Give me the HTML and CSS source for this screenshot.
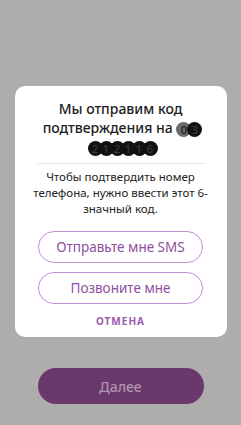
FILE: index.html
```html
<!DOCTYPE html>
<html lang="ru">
<head>
    <meta charset="UTF-8">
    <meta name="viewport" content="width=device-width, initial-scale=1.0">
    <title>Подтверждение</title>
    <link rel="stylesheet" href="styles.css">
</head>
<body>
    <div class="screen">
        <!-- Диалог подтверждения -->
        <div class="dialog">
            <h2 class="title">Мы отправим код<br>подтверждения на <span class="blot soft">0</span><span class="blot">3</span><br><span class="blot">2</span><span class="blot">1</span><span class="blot">2</span><span class="blot">1</span><span class="blot">1</span><span class="blot">6</span></h2>
            <div class="divider"></div>
            <p class="text">Чтобы подтвердить номер<br>телефона, нужно ввести этот 6-<br>значный код.</p>
            <button class="outline-button">Отправьте мне SMS</button>
            <button class="outline-button">Позвоните мне</button>
            <button class="cancel-button">ОТМЕНА</button>
        </div>
        <button class="next-button">Далее</button>
    </div>
</body>
</html>
```

FILE: styles.css
```css
body {
    font-family: "Noto Sans", Arial, sans-serif;
    margin: 0;
    padding: 0;
    background-color: #adadad;
}
.screen {
    height: 425px;
    display: flex;
    flex-direction: column;
    align-items: center;
    padding-top: 86px;
    box-sizing: border-box;
}
.dialog {
    width: 212px;
    background-color: #fff;
    border-radius: 10px;
    padding: 13px 0 6px;
    box-sizing: border-box;
    display: flex;
    flex-direction: column;
    align-items: center;
}
.title {
    margin: 0;
    font-size: 14px;
    font-weight: 500;
    line-height: 19px;
    color: #1d1d1d;
    text-align: center;
    white-space: nowrap;
}
.blot {
    display: inline-block;
    width: 15px;
    height: 15px;
    line-height: 15px;
    border-radius: 50%;
    background-color: #111;
    color: #3a3a3a;
    font-size: 11px;
    margin-right: -4px;
    vertical-align: middle;
}
.blot.soft {
    background-color: #6a6a6a;
    color: #1a1a1a;
}
.divider {
    width: 167px;
    height: 1px;
    background-color: #e6e6e6;
    margin: 7px 0 5px;
}
.text {
    margin: 0 0 14px;
    font-size: 11.5px;
    line-height: 16px;
    color: #222;
    text-align: center;
    white-space: nowrap;
}
button {
    font-family: inherit;
    cursor: pointer;
}
.outline-button {
    width: 165px;
    height: 32px;
    border: 1px solid #c68fd2;
    border-radius: 16px;
    background-color: #fff;
    color: #8f4fa0;
    font-size: 13.5px;
    margin-bottom: 9px;
}
.cancel-button {
    border: none;
    background: none;
    color: #9b5aae;
    font-size: 10px;
    font-weight: 700;
    line-height: 12px;
    letter-spacing: 1px;
    padding: 4px;
    margin-top: -2px;
}
.next-button {
    margin-top: 31px;
    width: 166px;
    height: 36px;
    border: none;
    border-radius: 18px;
    background-color: #6b386b;
    color: #ae93ae;
    font-size: 14px;
    font-weight: 500;
}
```
